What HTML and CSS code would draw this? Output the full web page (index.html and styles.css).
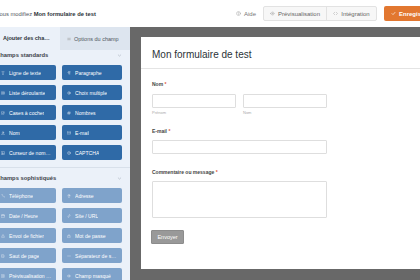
FILE: index.html
```html
<!DOCTYPE html>
<html lang="fr">
<head>
    <meta charset="UTF-8">
    <meta name="viewport" content="width=device-width, initial-scale=1.0">
    <title>Mon formulaire de test</title>
    <link rel="stylesheet" href="styles.css">
</head>
<body>
    <header class="topbar">
        <div class="editing">Vous modifiez <strong>Mon formulaire de test</strong></div>
        <div class="actions">
            <span class="help"><svg viewBox="0 0 10 10"><circle cx="5" cy="5" r="4"/><path d="M3.8 4a1.2 1.2 0 1 1 1.6 1.1c-.3.1-.4.4-.4.7M5 7.2v.1"/></svg>Aide</span>
            <div class="btn-group">
                <span class="preview"><svg viewBox="0 0 10 10"><path d="M1 5c1.2-2 2.6-3 4-3s2.8 1 4 3c-1.2 2-2.6 3-4 3S2.2 7 1 5z"/><circle cx="5" cy="5" r="1.2"/></svg>Prévisualisation</span>
                <span class="embed"><svg viewBox="0 0 10 10"><path d="M3.5 2.5 1 5l2.5 2.5M6.5 2.5 9 5 6.5 7.5"/></svg>Intégration</span>
            </div>
            <button class="save"><svg viewBox="0 0 10 10"><path d="M2 5.2l2 2 4-4.4"/></svg>Enregistrer</button>
        </div>
    </header>

    <div class="main">
        <aside class="sidebar">
            <div class="tabs">
                <div class="tab active">Ajouter des champs</div>
                <div class="tab"><svg viewBox="0 0 10 10"><path d="M2 3h6M2 5h6M2 7h6"/></svg>Options du champ</div>
            </div>

            <section class="group">
                <div class="group-head">Champs standards <svg viewBox="0 0 10 10"><path d="M2.5 3.8 5 6.2l2.5-2.4"/></svg></div>
                <div class="fields">
                    <div class="field-btn"><svg viewBox="0 0 10 10"><path d="M2 2h6M5 2v6M3.5 8h3"/></svg><span>Ligne de texte</span></div>
                    <div class="field-btn"><svg viewBox="0 0 10 10"><path d="M5 2v6M7 2v6M4 2h4M5 5.5H4a1.75 1.75 0 0 1 0-3.5"/></svg><span>Paragraphe</span></div>
                    <div class="field-btn"><svg viewBox="0 0 10 10"><rect x="1.5" y="2" width="7" height="6"/><path d="M3 4h4M3 6h4"/></svg><span>Liste déroulante</span></div>
                    <div class="field-btn"><svg viewBox="0 0 10 10"><circle cx="5" cy="5" r="3.5"/><circle cx="5" cy="5" r="1.2"/></svg><span>Choix multiple</span></div>
                    <div class="field-btn"><svg viewBox="0 0 10 10"><rect x="1.5" y="2" width="6" height="6"/><path d="M3 5l1.5 1.5L9 2"/></svg><span>Cases à cocher</span></div>
                    <div class="field-btn"><svg viewBox="0 0 10 10"><path d="M4 1.5 3 8.5M7 1.5l-1 7M1.5 3.8h7M1.2 6.2h7"/></svg><span>Nombres</span></div>
                    <div class="field-btn"><svg viewBox="0 0 10 10"><circle cx="5" cy="3.3" r="1.8"/><path d="M1.8 8.5c.4-2 1.6-2.8 3.2-2.8s2.8.8 3.2 2.8z"/></svg><span>Nom</span></div>
                    <div class="field-btn"><svg viewBox="0 0 10 10"><rect x="1.2" y="2.2" width="7.6" height="5.6"/><path d="M1.2 2.5 5 5.5l3.8-3"/></svg><span>E-mail</span></div>
                    <div class="field-btn"><svg viewBox="0 0 10 10"><rect x="1.5" y="1.5" width="7" height="7"/><path d="M3 6.5h4M4 3v5"/></svg><span>Curseur de nombres</span></div>
                    <div class="field-btn"><svg viewBox="0 0 10 10"><circle cx="5" cy="5" r="3.8"/><path d="M4 4a1 1 0 1 1 1.3 1c-.2.1-.3.3-.3.6M5 7v.1"/></svg><span>CAPTCHA</span></div>
                </div>
            </section>

            <section class="group fancy">
                <div class="group-head">Champs sophistiqués <svg viewBox="0 0 10 10"><path d="M2.5 3.8 5 6.2l2.5-2.4"/></svg></div>
                <div class="fields">
                    <div class="field-btn"><svg viewBox="0 0 10 10"><path d="M2 1.5h1.8l.8 2-1.1.8a5 5 0 0 0 2.2 2.2l.8-1.1 2 .8v1.8"/></svg><span>Téléphone</span></div>
                    <div class="field-btn"><svg viewBox="0 0 10 10"><path d="M5 8.8S2.2 5.8 2.2 3.8a2.8 2.8 0 0 1 5.6 0C7.8 5.8 5 8.8 5 8.8z"/><circle cx="5" cy="3.8" r="1"/></svg><span>Adresse</span></div>
                    <div class="field-btn"><svg viewBox="0 0 10 10"><rect x="1.3" y="2" width="7.4" height="6.5"/><path d="M1.3 4h7.4M3.3 1v2M6.7 1v2"/></svg><span>Date / Heure</span></div>
                    <div class="field-btn"><svg viewBox="0 0 10 10"><path d="M4.2 5.8 5.8 4.2M3.8 4.6 2.6 5.8a1.6 1.6 0 0 0 2.3 2.3L6 6.9M6.2 5.4l1.2-1.2a1.6 1.6 0 0 0-2.3-2.3L4 3.1"/></svg><span>Site / URL</span></div>
                    <div class="field-btn"><svg viewBox="0 0 10 10"><path d="M5 6.5V1.8M3 3.8 5 1.8l2 2M1.5 6.5v2h7v-2"/></svg><span>Envoi de fichier</span></div>
                    <div class="field-btn"><svg viewBox="0 0 10 10"><rect x="2" y="4.5" width="6" height="4.5"/><path d="M3.3 4.5V3.2a1.7 1.7 0 0 1 3.4 0v1.3"/></svg><span>Mot de passe</span></div>
                    <div class="field-btn"><svg viewBox="0 0 10 10"><path d="M2.5 1.5h3.5l1.5 1.5v5.5h-5zM2.5 5h5"/></svg><span>Saut de page</span></div>
                    <div class="field-btn"><svg viewBox="0 0 10 10"><path d="M1.5 5h7"/></svg><span>Séparateur de section</span></div>
                    <div class="field-btn"><svg viewBox="0 0 10 10"><rect x="1.8" y="1.5" width="6.4" height="7"/><path d="M3.3 4h3.4M3.3 6h3.4"/></svg><span>Prévisualisation de l'entrée</span></div>
                    <div class="field-btn"><svg viewBox="0 0 10 10"><path d="M1 5c1.2-2 2.6-3 4-3s2.8 1 4 3c-1.2 2-2.6 3-4 3S2.2 7 1 5z"/><circle cx="5" cy="5" r="1.2"/></svg><span>Champ masqué</span></div>
                </div>
            </section>
        </aside>

        <div class="canvas">
            <div class="form-card">
                <h2 class="form-title">Mon formulaire de test</h2>
                <div class="form-body">
                    <div class="row name-row">
                        <div class="label">Nom <span class="req">*</span></div>
                        <div class="name-cols">
                            <div><div class="input"></div><div class="sublabel">Prénom</div></div>
                            <div><div class="input"></div><div class="sublabel">Nom</div></div>
                        </div>
                    </div>
                    <div class="row">
                        <div class="label">E-mail <span class="req">*</span></div>
                        <div class="input wide"></div>
                    </div>
                    <div class="row">
                        <div class="label">Commentaire ou message <span class="req">*</span></div>
                        <div class="input wide area"></div>
                    </div>
                    <button class="submit">Envoyer</button>
                </div>
            </div>
        </div>
    </div>
</body>
</html>
```

FILE: styles.css
```css
* { box-sizing: border-box; }
body { margin: 0; width: 420px; height: 280px; overflow: hidden; font-family: 'Liberation Sans', Arial, sans-serif; color: #3c434a; background: #686868; }
svg { width: 5px; height: 5px; fill: none; stroke: currentColor; stroke-width: 1; stroke-linecap: round; stroke-linejoin: round; flex: none; }

.topbar { height: 27px; background: #fff; display: flex; align-items: center; justify-content: space-between; }
.editing { font-size: 5.8px; color: #50575e; margin-left: -4px; white-space: nowrap; }
.editing strong { color: #2c3338; }
.actions { display: flex; align-items: center; white-space: nowrap; margin-right: -18px; }
.help { display: flex; align-items: center; gap: 3px; font-size: 6px; color: #777; margin-right: 7px; }
.help svg { width: 5px; height: 5px; stroke: #aaa; }
.btn-group { display: flex; height: 15px; border: 1px solid #e2e2e2; border-radius: 2px; background: #f7f7f7; }
.btn-group span { display: flex; align-items: center; justify-content: center; gap: 3px; font-size: 6px; color: #666; }
.btn-group .preview { width: 62px; }
.btn-group .embed { width: 50px; border-left: 1px solid #e2e2e2; }
.btn-group svg { stroke: #aaa; }
.save { display: flex; align-items: center; gap: 3px; height: 15px; margin-left: 7px; padding: 0 7px; border: 0; border-radius: 2px; background: #e27730; color: #fff; font: bold 6px 'Liberation Sans', Arial, sans-serif; }
.save svg { stroke-width: 1.3; }

.main { display: flex; height: 253px; }
.sidebar { width: 130px; flex: none; background: #ebf1f9; overflow: hidden; }
.tabs { display: flex; height: 23px; }
.tab { display: flex; align-items: center; gap: 3px; font-size: 5.5px; color: #50575e; white-space: nowrap; overflow: hidden; text-overflow: ellipsis; }
.tab.active { width: 60px; padding: 0 6px 0 3px; background: #ebf1f9; color: #2c3338; font-weight: bold; display: block; line-height: 23px; }
.tab:not(.active) { width: 70px; padding-left: 7px; background: #dde5ef; }
.tab svg { stroke: #999; width: 4px; height: 4px; }

.group { padding: 0 0 7px; margin-left: -4px; }
.group.fancy { border-top: 1px solid #d8e0ea; padding-top: 5px; margin-left: 0; }
.group.fancy .group-head, .group.fancy .fields { margin-left: -4px; }
.group-head { display: flex; justify-content: space-between; align-items: center; width: 126px; height: 10px; margin-bottom: 5px; font-size: 5.8px; font-weight: bold; color: #3c434a; }
.group-head svg { stroke: #9aa5b1; width: 5px; height: 5px; }
.fields { display: grid; grid-template-columns: 60px 60px; column-gap: 6px; row-gap: 5px; }
.field-btn { display: flex; align-items: center; gap: 4px; height: 15px; padding: 0 4px 0 5px; border-radius: 2px; background: #2f6aa7; color: #fff; font-size: 5.1px; white-space: nowrap; overflow: hidden; }
.field-btn span { overflow: hidden; text-overflow: ellipsis; }
.field-btn svg { width: 4px; height: 4px; stroke: rgba(255,255,255,0.75); }
.fancy .field-btn { background: #7fa3cb; }

.canvas { flex: 1; padding: 10px 0 0 11px; }
.form-card { background: #fff; height: 232px; width: 290px; }
.form-title { margin: 0; height: 32px; padding: 13px 0 0 11px; font-size: 10px; line-height: 10px; font-weight: normal; color: #2c3338; border-bottom: 1px solid #e4e4e4; }
.form-body { padding: 12px 0 0 11px; }
.label { font-size: 5px; line-height: 6px; font-weight: bold; color: #444; margin-bottom: 6px; }
.name-row .label { margin-bottom: 7px; }
.req { color: #e0583c; }
.row { margin-bottom: 15px; }
.name-row { margin-bottom: 13px; }
.name-cols { display: flex; gap: 7px; }
.input { width: 84px; height: 14px; border: 1px solid #dedede; border-radius: 1px; }
.input.wide { width: 175px; }
.input.area { height: 37px; }
.row:nth-child(3) { margin-bottom: 12px; }
.sublabel { font-size: 4px; line-height: 5px; color: #aaa; margin-top: 2px; }
.submit { display: block; width: 33px; height: 14px; margin-left: -1px; border: 1px solid #8c8c8c; border-radius: 1px; background: #999; color: #fff; font: 5.5px 'Liberation Sans', Arial, sans-serif; padding: 0; }
```
